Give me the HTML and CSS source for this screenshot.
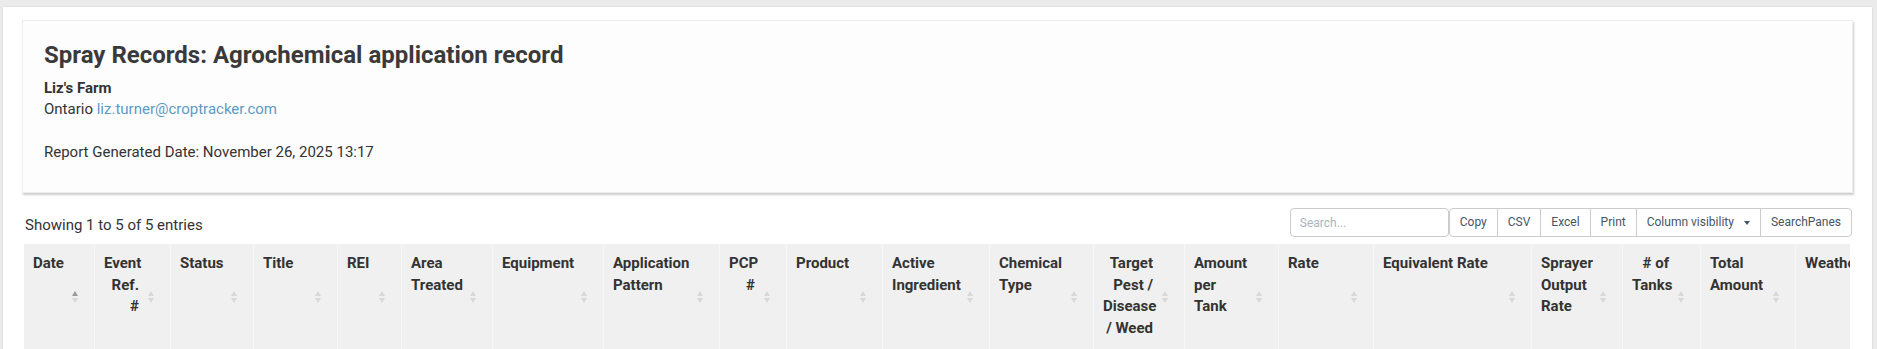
FILE: index.html
```html
<!DOCTYPE html>
<html>
<head>
    <meta charset="UTF-8">
    <title>Spray Records: Agrochemical application record</title>
    <link rel="stylesheet" href="styles.css">
</head>
<body>
<div class="page">
    <div class="report-header">
        <h1 class="report-title">Spray Records: Agrochemical application record</h1>
        <div class="farm-name">Liz's Farm</div>
        <div class="farm-contact">Ontario <a href="#">liz.turner@croptracker.com</a></div>
        <div class="report-date">Report Generated Date: November 26, 2025 13:17</div>
    </div>

    <div class="dt-toolbar">
        <div class="dt-info">Showing 1 to 5 of 5 entries</div>
        <div class="dt-controls">
            <input type="search" class="dt-search" placeholder="Search...">
            <div class="dt-buttons">
                <button>Copy</button>
                <button>CSV</button>
                <button>Excel</button>
                <button>Print</button>
                <button>Column visibility <span class="caret"></span></button>
                <button>SearchPanes</button>
            </div>
        </div>
    </div>

    <div class="dt-scroll">
        <table class="records">
            <thead>
                <tr>
                    <th class="c-date sorted">Date</th>
                    <th class="c-ref num">Event Ref. #</th>
                    <th class="c-status">Status</th>
                    <th class="c-title">Title</th>
                    <th class="c-rei">REI</th>
                    <th class="c-area">Area Treated</th>
                    <th class="c-equip">Equipment</th>
                    <th class="c-pattern">Application Pattern</th>
                    <th class="c-pcp num">PCP #</th>
                    <th class="c-product">Product</th>
                    <th class="c-active">Active Ingredient</th>
                    <th class="c-chem">Chemical Type</th>
                    <th class="c-target num">Target Pest / Disease / Weed</th>
                    <th class="c-amount">Amount per Tank</th>
                    <th class="c-rate">Rate</th>
                    <th class="c-equiv">Equivalent Rate</th>
                    <th class="c-output">Sprayer Output Rate</th>
                    <th class="c-tanks num"># of Tanks</th>
                    <th class="c-total">Total Amount</th>
                    <th class="c-weather">Weather</th>
                </tr>
            </thead>
            <tbody>
                <tr>
                    <td></td><td></td><td></td><td></td><td></td>
                    <td></td><td></td><td></td><td></td><td></td>
                    <td></td><td></td><td></td><td></td><td></td>
                    <td></td><td></td><td></td><td></td><td></td>
                </tr>
            </tbody>
        </table>
    </div>
</div>
</body>
</html>
```

FILE: styles.css
```css
body {
    margin: 0;
    background: #ebebeb;
    font-family: Roboto, "Liberation Sans", sans-serif;
    font-size: 15px;
    line-height: 1.42857;
    color: #333;
    overflow: hidden;
}

.page {
    margin: 7px 5px 0 3px;
    padding: 13px 19px 0 19px;
    min-height: 400px;
    background: #fff;
    box-shadow: 0 0 2px rgba(0, 0, 0, 0.12);
}

/* report header card */
.report-header {
    padding: 19px 21px 29px;
    background: #fdfdfd;
    border: 1px solid #eeeeee;
    box-shadow: 1px 2px 2px rgba(0, 0, 0, 0.2);
}

.report-title {
    margin: 0 0 7px;
    font-size: 24px;
    line-height: 31px;
    font-weight: bold;
    color: #3a3a3a;
}

.farm-name {
    font-weight: bold;
}

.farm-contact a {
    color: #5b9ac6;
    text-decoration: none;
}

.report-date {
    margin-top: 21px;
}

/* table toolbar */
.dt-toolbar {
    display: flex;
    justify-content: space-between;
    align-items: center;
    margin: 15px 1px 0 0;
}

.dt-info {
    margin: 5px 0 0 3px;
}

.dt-controls {
    display: flex;
}

.dt-search {
    box-sizing: border-box;
    width: 159px;
    height: 29px;
    padding: 0 9px;
    border: 1px solid #cccccc;
    border-radius: 4px;
    font-family: inherit;
    font-size: 12px;
    color: #555;
}

.dt-search::placeholder {
    color: #a9b4bf;
}

.dt-buttons {
    display: flex;
}

.dt-buttons button {
    height: 29px;
    padding: 5px 10px;
    margin-left: -1px;
    background: #fff;
    border: 1px solid #cccccc;
    border-radius: 0;
    font-family: inherit;
    font-size: 12px;
    line-height: 17px;
    color: #465565;
}

.dt-buttons button:first-child {
    margin-left: 0;
    border-radius: 4px 0 0 4px;
}

.dt-buttons button:last-child {
    border-radius: 0 4px 4px 0;
}

.caret {
    display: inline-block;
    margin-left: 7px;
    vertical-align: middle;
    border-top: 4px solid #465565;
    border-left: 3.5px solid transparent;
    border-right: 3.5px solid transparent;
}

/* records table */
.dt-scroll {
    margin: 7px 3px 0 2px;
    overflow: hidden;
}

.records {
    width: 1881px;
    table-layout: fixed;
    border-collapse: separate;
    border-spacing: 0;
}

.records th {
    position: relative;
    box-sizing: border-box;
    padding: 9px 29px 10px 9px;
    background: #f0f0f0;
    border-left: 1px solid #f7f7f7;
    font-weight: bold;
    text-align: left;
    vertical-align: top;
}

.records th:first-child {
    border-left: none;
}

.records th.num {
    text-align: right;
    padding-right: 31px;
}

/* sort arrows */
.records th::before,
.records th::after {
    content: "";
    position: absolute;
    right: 16px;
    border-left: 3px solid transparent;
    border-right: 3px solid transparent;
}

.records th::before {
    bottom: calc(50% + 1px);
    border-bottom: 5px solid #d8d8d8;
}

.records th::after {
    top: calc(50% + 1px);
    border-top: 5px solid #d8d8d8;
}

.records th.sorted::before {
    border-bottom-color: #9a9a9a;
}

.records td {
    height: 40px;
    border-left: 1px solid #eeeeee;
    border-top: 1px solid #e4e4e4;
}

.records td:first-child {
    border-left: none;
}

.c-date { width: 70px; }
.c-ref { width: 76px; }
.c-status { width: 83px; }
.c-title { width: 84px; }
.c-rei { width: 64px; }
.c-area { width: 91px; }
.c-equip { width: 111px; }
.c-pattern { width: 116px; }
.c-pcp { width: 67px; }
.c-product { width: 96px; }
.c-active { width: 107px; }
.c-chem { width: 104px; }
.c-target { width: 91px; }
.c-amount { width: 94px; }
.c-rate { width: 95px; }
.c-equiv { width: 158px; }
.c-output { width: 91px; }
.c-tanks { width: 78px; }
.c-total { width: 95px; }
.c-weather { width: 110px; }
```
